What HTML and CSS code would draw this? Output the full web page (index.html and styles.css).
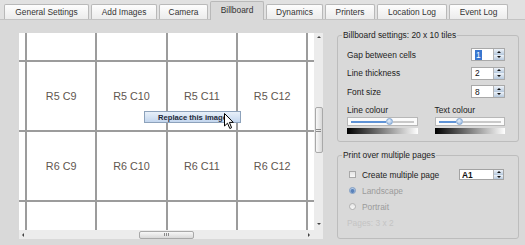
FILE: index.html
```html
<!DOCTYPE html>
<html lang="en">
<head>
    <meta charset="UTF-8">
    <meta name="viewport" content="width=device-width, initial-scale=1.0">
    <title>Billboard Settings</title>
    <link rel="stylesheet" href="styles.css">
</head>
<body>
    <div class="tabs">
        <div class="tab">General Settings</div>
        <div class="tab">Add Images</div>
        <div class="tab">Camera</div>
        <div class="tab active">Billboard</div>
        <div class="tab">Dynamics</div>
        <div class="tab">Printers</div>
        <div class="tab">Location Log</div>
        <div class="tab">Event Log</div>
    </div>

    <div class="pane">
        <div class="scroll-area">
            <div class="viewport">
                <!-- only the tiles in view get their label -->
                <div class="tiles">
                    <div class="tile"></div>
                    <div class="tile"></div>
                    <div class="tile"></div>
                    <div class="tile"></div>
                    <div class="tile"></div>
                    <div class="tile"></div>

                    <div class="tile"></div>
                    <div class="tile">R5 C9</div>
                    <div class="tile">R5 C10</div>
                    <div class="tile">R5 C11</div>
                    <div class="tile">R5 C12</div>
                    <div class="tile"></div>

                    <div class="tile"></div>
                    <div class="tile">R6 C9</div>
                    <div class="tile">R6 C10</div>
                    <div class="tile">R6 C11</div>
                    <div class="tile">R6 C12</div>
                    <div class="tile"></div>

                    <div class="tile"></div>
                    <div class="tile"></div>
                    <div class="tile"></div>
                    <div class="tile"></div>
                    <div class="tile"></div>
                    <div class="tile"></div>
                </div>
                <div class="tooltip">Replace this image</div>
                <svg class="cursor" width="10" height="17" viewBox="0 0 10 17">
                    <path d="M0.5 0.5 V13 L3.5 10.2 L5.8 15.5 L7.6 14.7 L5.4 9.4 H9.3 Z" fill="#fff" stroke="#000" stroke-width="1" stroke-linejoin="round"/>
                </svg>
            </div>
            <div class="vbar">
                <span class="arrow up"></span>
                <div class="thumb thumb-v"></div>
                <span class="arrow down"></span>
            </div>
            <div class="hbar">
                <span class="arrow left"></span>
                <div class="thumb thumb-h"></div>
                <span class="arrow right"></span>
            </div>
            <div class="corner"></div>
        </div>

        <div class="settings">
            <fieldset class="group">
                <legend>Billboard settings: 20 x 10 tiles</legend>
                <div class="group-body">
                    <div class="spin-row">
                        <span>Gap between cells</span>
                        <div class="spin">
                            <span class="spin-value"><span class="selected">1</span></span>
                            <span class="spin-btns"><span class="spin-up"></span><span class="spin-down"></span></span>
                        </div>
                    </div>
                    <div class="spin-row">
                        <span>Line thickness</span>
                        <div class="spin">
                            <span class="spin-value">2</span>
                            <span class="spin-btns"><span class="spin-up"></span><span class="spin-down"></span></span>
                        </div>
                    </div>
                    <div class="spin-row">
                        <span>Font size</span>
                        <div class="spin">
                            <span class="spin-value">8</span>
                            <span class="spin-btns"><span class="spin-up"></span><span class="spin-down"></span></span>
                        </div>
                    </div>

                    <div class="colours">
                        <div class="colour">
                            <div class="colour-label">Line colour</div>
                            <div class="slider">
                                <span class="slider-fill" style="width: 35px"></span>
                                <span class="slider-handle"></span>
                                <span class="slider-rest"></span>
                            </div>
                            <div class="ramp"></div>
                        </div>
                        <div class="colour">
                            <div class="colour-label">Text colour</div>
                            <div class="slider">
                                <span class="slider-fill" style="width: 17px"></span>
                                <span class="slider-handle"></span>
                                <span class="slider-rest"></span>
                            </div>
                            <div class="ramp"></div>
                        </div>
                    </div>
                </div>
            </fieldset>

            <fieldset class="group">
                <legend>Print over multiple pages</legend>
                <div class="group-body print-body">
                    <div class="option-row">
                        <span class="option"><span class="check"></span>Create multiple page</span>
                        <div class="combo">
                            <span class="combo-value">A1</span>
                            <span class="combo-btn"><span class="spin-up"></span><span class="spin-down"></span></span>
                        </div>
                    </div>
                    <div class="option-row disabled">
                        <span class="option"><span class="radio checked"></span>Landscape</span>
                    </div>
                    <div class="option-row disabled">
                        <span class="option"><span class="radio"></span>Portrait</span>
                    </div>
                    <div class="option-row pages">Pages: 3 x 2</div>
                </div>
            </fieldset>
        </div>
    </div>
</body>
</html>
```

FILE: styles.css
```css
body {
    margin: 0;
    width: 525px;
    height: 245px;
    overflow: hidden;
    background-color: #d9d9d9;
    font-family: "Liberation Sans", Arial, sans-serif;
    font-size: 8.4px;
    color: #222;
}

/* tab strip */
.tabs {
    display: flex;
    align-items: flex-end;
    gap: 2px;
    height: 19px;
    padding-left: 4px;
    background-color: #e1e1e1;
    border-bottom: 1px solid #c3c3c3;
}
.tab {
    box-sizing: border-box;
    height: 15px;
    display: flex;
    align-items: center;
    justify-content: center;
    border: 1px solid #b9b9b9;
    border-bottom: none;
    border-radius: 2px 2px 0 0;
    background: linear-gradient(#fdfdfd, #ececec);
    color: #333;
}
.tab.active {
    height: 19px;
    margin-bottom: -1px;
    padding-bottom: 2px;
    background: #d9d9d9;
}
.tab:nth-child(1) { width: 85px; }
.tab:nth-child(2) { width: 66px; }
.tab:nth-child(3) { width: 49px; }
.tab:nth-child(4) { width: 54px; }
.tab:nth-child(5) { width: 57px; }
.tab:nth-child(6) { width: 50px; }
.tab:nth-child(7) { width: 70px; }
.tab:nth-child(8) { width: 59px; }

.pane {
    display: flex;
    gap: 14px;
    padding: 10px 6px 0 19px;
}

/* billboard preview */
.scroll-area {
    margin-top: 3px;
    display: grid;
    grid-template-columns: 295px 9px;
    grid-template-rows: 197px 9px;
}
.viewport {
    position: relative;
    overflow: hidden;
    background-color: #fff;
}
.tiles {
    display: grid;
    grid-template-columns: repeat(6, 68.33px);
    grid-auto-rows: 68.33px;
    gap: 2px;
    width: max-content;
    margin: -41.5px 0 0 -62.33px;
    background-color: #9c9c9c;
}
.tile {
    display: flex;
    align-items: center;
    justify-content: center;
    background-color: #fff;
    font-size: 10.8px;
    color: #5f564f;
}
.tooltip {
    position: absolute;
    left: 125px;
    top: 78px;
    box-sizing: border-box;
    width: 97px;
    height: 12px;
    display: flex;
    align-items: center;
    justify-content: center;
    border: 1px solid #8da2bb;
    background: linear-gradient(#e8f0f9, #c3d6ee);
    font-size: 7.6px;
    font-weight: bold;
    color: #1e2a3a;
}
.cursor {
    position: absolute;
    left: 204.5px;
    top: 79.5px;
}

/* scroll bars */
.vbar, .hbar, .corner {
    background-color: #ececec;
}
.vbar {
    display: flex;
    flex-direction: column;
    align-items: center;
}
.hbar {
    display: flex;
    align-items: center;
}
.arrow {
    width: 0;
    height: 0;
    border: 2px solid transparent;
}
.arrow.up {
    margin-top: 3px;
    border-bottom-color: #444;
    border-top-width: 0;
}
.arrow.down {
    margin-top: auto;
    margin-bottom: 5px;
    border-top-color: #444;
    border-bottom-width: 0;
}
.arrow.left {
    margin-left: 3px;
    border-right-color: #444;
    border-left-width: 0;
}
.arrow.right {
    margin-left: auto;
    margin-right: 4px;
    border-left-color: #444;
    border-right-width: 0;
}
.thumb {
    box-sizing: border-box;
    display: flex;
    align-items: center;
    justify-content: center;
    border: 1px solid #a9a9a9;
    border-radius: 2px;
}
.thumb::after {
    content: "";
    width: 5px;
    height: 3px;
    background: repeating-linear-gradient(#8a8a8a 0 1px, transparent 1px 2px);
}
.thumb-v {
    margin-top: 69px;
    width: 8px;
    height: 46px;
    background: linear-gradient(to right, #f7f7f7, #d9d9d9);
}
.thumb-h {
    margin-left: 115px;
    width: 55px;
    height: 8px;
    background: linear-gradient(#f7f7f7, #d9d9d9);
}
.thumb-h::after {
    width: 5px;
    height: 3px;
    background: repeating-linear-gradient(to right, #8a8a8a 0 1px, transparent 1px 2px);
}

/* settings */
.settings {
    width: 182px;
    display: flex;
    flex-direction: column;
    gap: 8px;
}
.group {
    margin: 0;
    padding: 0;
    min-width: 0;
    border: 1px solid #bdbdbd;
    border-radius: 3px;
}
.group legend {
    margin-left: 4px;
    padding: 0 1px;
    line-height: 10px;
    color: #222;
}
.group-body {
    padding: 8px 13px 7px 9px;
}
.spin-row {
    height: 13px;
    display: flex;
    align-items: center;
    justify-content: space-between;
}
.spin-row + .spin-row {
    margin-top: 5.5px;
}
.spin {
    box-sizing: border-box;
    width: 34px;
    height: 13px;
    display: flex;
    border: 1px solid #a9a9a9;
    background-color: #fff;
}
.spin-value {
    flex-grow: 1;
    display: flex;
    align-items: center;
    padding-left: 3px;
    color: #111;
}
.selected {
    padding: 0 1px;
    background-color: #3a76cf;
    color: #fff;
    line-height: 10px;
}
.spin-btns, .combo-btn {
    width: 10px;
    display: flex;
    flex-direction: column;
    border-left: 1px solid #b4b4b4;
}
.spin-up, .spin-down {
    flex: 1;
    display: flex;
    align-items: center;
    justify-content: center;
    background: linear-gradient(#eef3f9, #b5c8dd);
}
.spin-up::after, .spin-down::after {
    content: "";
    border: 2px solid transparent;
}
.spin-up::after {
    border-bottom-color: #111;
    border-top-width: 0;
}
.spin-down::after {
    border-top-color: #111;
    border-bottom-width: 0;
}

.colours {
    margin-top: 7px;
    display: grid;
    grid-template-columns: 1fr 1fr;
    column-gap: 17px;
}
.colour-label {
    line-height: 10px;
}
.slider {
    box-sizing: border-box;
    margin-top: 2px;
    height: 9px;
    display: flex;
    align-items: center;
    padding: 0 3px;
    border: 1px solid #b7b7b7;
    background-color: #fbfbfb;
}
.slider-fill {
    height: 2px;
    background-color: #5f93d6;
}
.slider-handle {
    box-sizing: border-box;
    width: 7px;
    height: 7px;
    border-radius: 50%;
    border: 1px solid #7fa3cf;
    background: radial-gradient(circle at 40% 35%, #e4eefa, #91b3dd);
}
.slider-rest {
    flex-grow: 1;
    height: 2px;
    background-color: #c9c9c9;
}
.ramp {
    margin-top: 2px;
    height: 6px;
    background: linear-gradient(to right, #000, #fff);
}

.print-body {
    padding-top: 6.5px;
}
.option-row {
    height: 16px;
    display: flex;
    align-items: center;
    justify-content: space-between;
}
.option {
    display: flex;
    align-items: center;
    gap: 6px;
    padding-left: 2px;
}
.check {
    box-sizing: border-box;
    width: 7px;
    height: 7px;
    border: 1px solid #a8a8a8;
    background: linear-gradient(#e4e4e4, #f7f7f7);
}
.radio {
    box-sizing: border-box;
    width: 7px;
    height: 7px;
    border-radius: 50%;
    border: 1px solid #b2b2b2;
    background: linear-gradient(#e6e6e6, #f8f8f8);
}
.radio.checked {
    border-color: #7d9cc4;
    background: radial-gradient(circle at 50% 60%, #5a82ba 0 1.5px, #b7cbe4 2.5px);
}
.disabled {
    color: #9b9b9b;
}
.pages {
    color: #c4c4c4;
}
.combo {
    box-sizing: border-box;
    width: 45px;
    height: 11px;
    margin-right: 1px;
    display: flex;
    border: 1px solid #a3a3a3;
    background-color: #fff;
}
.combo-value {
    flex-grow: 1;
    display: flex;
    align-items: center;
    padding-left: 2px;
    font-weight: bold;
    color: #111;
}
.combo-btn {
    width: 9px;
}
```
